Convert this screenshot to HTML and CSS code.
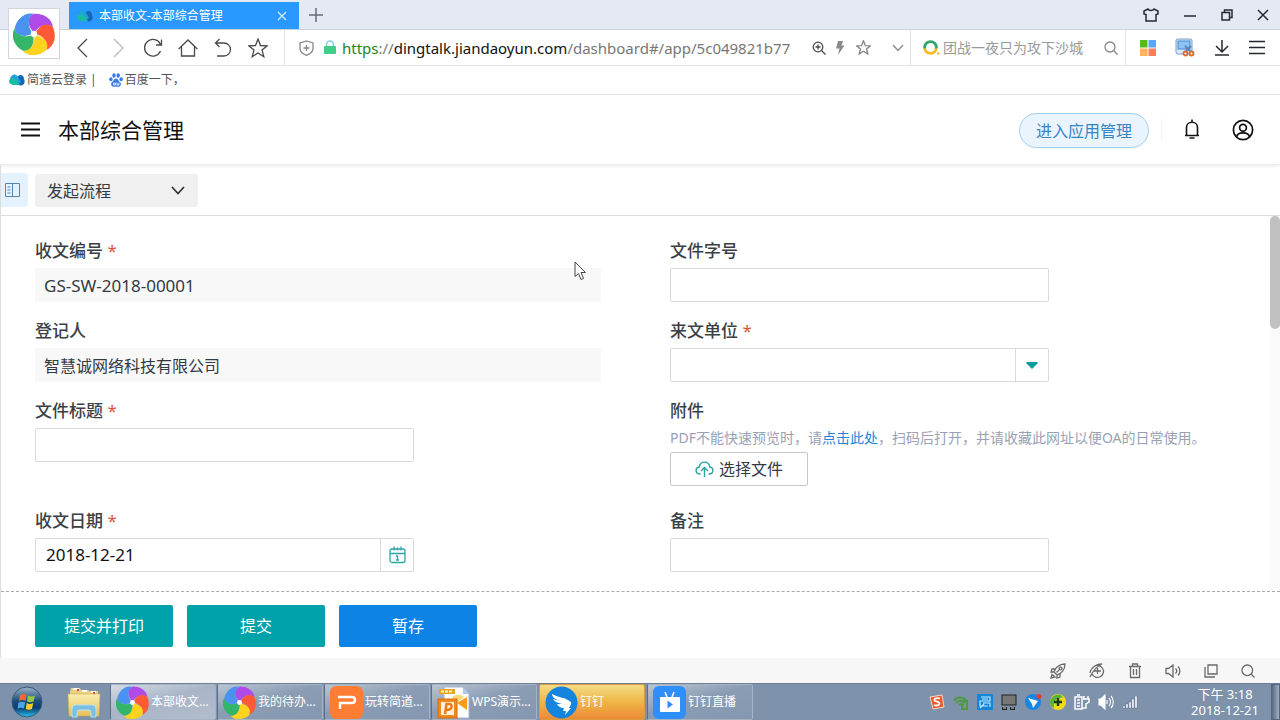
FILE: index.html
```
<!DOCTYPE html>
<html lang="zh-CN">
<head>
<meta charset="utf-8">
<title>本部收文-本部综合管理</title>
<link rel="stylesheet" href="styles.css">
</head>
<body>
<svg class="defs" aria-hidden="true">
  <defs>
    <linearGradient id="orb" x1="0" y1="0" x2="0" y2="1"><stop offset="0" stop-color="#9fb4c8"/><stop offset=".45" stop-color="#1f4e7e"/><stop offset=".7" stop-color="#0b3c70"/><stop offset="1" stop-color="#2cc3ef"/></linearGradient>
    <linearGradient id="folder" x1="0" y1="0" x2="0" y2="1"><stop offset="0" stop-color="#fbeeb0"/><stop offset="1" stop-color="#e6c05c"/></linearGradient>
    <linearGradient id="ring" x1="0" y1="0" x2="0" y2="1"><stop offset=".5" stop-color="#2fa768"/><stop offset=".65" stop-color="#f9b91f"/></linearGradient>
    <path id="petal" d="M20 19C12 13 11 5 17 1C26-1 35 3 37 11C32 8 24 10 20 19Z"/>
    <symbol id="swirl" viewBox="0 0 40 40">
      <g transform="rotate(8 20 20)">
      <use href="#petal" fill="#b04bea"/>
      <use href="#petal" fill="#ff5a35" transform="rotate(72 20 20)"/>
      <use href="#petal" fill="#ffd21f" transform="rotate(144 20 20)"/>
      <use href="#petal" fill="#33b56a" transform="rotate(216 20 20)"/>
      <use href="#petal" fill="#4b92f0" transform="rotate(288 20 20)"/>
      </g>
      <circle cx="20" cy="20" r="3" fill="#fff"/>
    </symbol>
    <symbol id="cloud" viewBox="0 0 16 12">
      <path d="M8 4C9 0 15 0 15 5C17 9 14 12 11 11.500L5 9Z" fill="#1766b5"/>
      <path d="M1 5C2 0 7-1 9 3L12 8L7 11C2 11-1 9 1 5Z" fill="#1fa3d8"/>
      <path d="M1 5C4 3 6 5 8 7L11 11H5C1 11-1 8 1 5Z" fill="#18bda2"/>
    </symbol>
  </defs>
</svg>

<header class="browser">
  <div class="brand"><svg width="42" height="42"><use href="#swirl"/></svg></div>
  <div class="tabs">
    <div class="tab">
      <svg width="16" height="12"><use href="#cloud"/></svg>
      <span class="tab-title">本部收文-本部综合管理</span>
      <button class="bare" aria-label="关闭标签"><svg width="10" height="10" viewBox="0 0 10 10" stroke="#d7ecff" stroke-width="1.200"><path d="M1 1L9 9M9 1L1 9"/></svg></button>
    </div>
    <button class="bare add" aria-label="新标签"><svg width="14" height="14" viewBox="0 0 14 14" stroke="#66697a" stroke-width="1.500"><path d="M7 0V14M0 7H14"/></svg></button>
    <div class="window-buttons">
      <button class="bare" aria-label="皮肤"><svg width="16" height="16" viewBox="0 0 16 16" class="line dark"><path d="M5 2C6 4 10 4 11 2L15 4V7L13 7.500V14H3V7.500L1 7V4Z"/></svg></button>
      <button class="bare" aria-label="最小化"><svg width="14" height="16" viewBox="0 0 14 16" class="line dark"><path d="M1 9H13"/></svg></button>
      <button class="bare" aria-label="还原"><svg width="12" height="12" viewBox="0 0 12 12" class="line dark"><path d="M1 3.500H8.500V11H1ZM3.500 3V1H11V8.500H9"/></svg></button>
      <button class="bare" aria-label="关闭"><svg width="12" height="12" viewBox="0 0 12 12" class="line dark"><path d="M1 1L11 11M11 1L1 11"/></svg></button>
    </div>
  </div>

  <div class="toolbar">
    <nav class="nav-buttons" aria-label="导航">
      <button class="bare" aria-label="后退"><svg width="20" height="20" viewBox="0 0 20 20" class="line"><path d="M14 1L5 10L14 19"/></svg></button>
      <button class="bare" aria-label="前进"><svg width="20" height="20" viewBox="0 0 20 20" class="line pale"><path d="M6 1L15 10L6 19"/></svg></button>
      <button class="bare" aria-label="刷新"><svg width="20" height="20" viewBox="0 0 20 20" class="line"><path d="M17.500 13A8.300 8.300 0 1 1 17.500 6.500M18.500 1.500V7H13"/></svg></button>
      <button class="bare" aria-label="主页"><svg width="20" height="20" viewBox="0 0 20 20" class="line"><path d="M0.700 11L10 2L19.300 11M3.500 8.500V18H16.500V8.500"/></svg></button>
      <button class="bare" aria-label="撤销"><svg width="20" height="20" viewBox="0 0 20 20" class="line"><path d="M6.500 1L2.500 5L6.500 9M3 5H11A6.500 6.500 0 0 1 11 18H4"/></svg></button>
      <button class="bare" aria-label="收藏"><svg width="20" height="20" viewBox="0 0 20 20" class="line"><path d="M10 1L12.500 7.500L19.200 7.800L14 12L15.800 18.700L10 15L4.200 18.700L6 12L0.800 7.800L7.500 7.500Z"/></svg></button>
    </nav>
    <div class="address">
      <svg width="15" height="16" viewBox="0 0 15 16" class="line grey"><path d="M7.500 1L14 3V8.500C14 12 11 14 7.500 15.300C4 14 1 12 1 8.500V3ZM7.500 5V11M4.500 8H10.500"/></svg>
      <svg class="lock" width="12" height="15" viewBox="0 0 12 15"><path d="M2.500 7V4.500A3.500 3.500 0 0 1 9.500 4.500V7" fill="none" stroke="#85cfe4" stroke-width="1.600"/><rect y="6" width="12" height="8" rx="1" fill="#3fce89"/></svg>
      <div class="url" role="textbox" aria-label="地址"><span class="scheme">https</span>://<span class="host">dingtalk.jiandaoyun.com</span>/dashboard#/app/5c049821b77</div>
      <svg width="14" height="14" viewBox="0 0 14 14" class="line"><circle cx="6" cy="6" r="4.800"/><path d="M9.500 9.500L13.500 13.500M3.500 6H8.500M6 3.500V8.500"/></svg>
      <svg class="bolt" width="10" height="14" viewBox="0 0 10 14"><path d="M3 0H8L6.500 4.500H9.500L3 14L4.500 7.500H1Z" fill="#8a8a8a"/></svg>
      <svg width="15" height="15" viewBox="0 0 20 20" class="line grey thick"><path d="M10 1L12.500 7.500L19.200 7.800L14 12L15.800 18.700L10 15L4.200 18.700L6 12L0.800 7.800L7.500 7.500Z"/></svg>
    </div>
    <button class="bare drop" aria-label="历史地址"><svg width="12" height="8" viewBox="0 0 12 8" class="line grey"><path d="M1 1L6 6.500L11 1"/></svg></button>
    <div class="search">
      <svg width="17" height="16" viewBox="0 0 17 16"><circle cx="7.500" cy="7.500" r="5.900" fill="none" stroke="url(#ring)" stroke-width="2.800"/><circle cx="15.200" cy="13.500" r="1.200" fill="#f9b91f"/></svg>
      <input type="text" aria-label="搜索" placeholder="团战一夜只为攻下沙城">
      <svg width="14" height="14" viewBox="0 0 14 14" class="line grey"><circle cx="6" cy="6" r="5"/><path d="M9.700 9.700L13.500 13.500"/></svg>
    </div>
    <div class="tools">
      <button class="bare" aria-label="应用"><svg width="16" height="16" viewBox="0 0 16 16"><path d="M0 0H7.500V7.500H0Z" fill="#5cb917"/><path d="M8.500 0H16V7.500H8.500Z" fill="#56a8ff"/><path d="M0 8.500H7.500V16H0Z" fill="#ffb35c"/><path d="M8.500 8.500H16V16H8.500Z" fill="#ff7d52"/></svg></button>
      <button class="bare" aria-label="截图"><svg width="20" height="20" viewBox="0 0 20 20"><rect x="1" y="1" width="16" height="15" rx="2" fill="#d8e9f8" stroke="#7a9dc4"/><rect x="3" y="3" width="12" height="8" fill="#8cc4f4" stroke="#4689cf"/><path d="M10 8L16 14M16 8L10 14" stroke="#5685bd" stroke-width="2"/><g fill="#fff" stroke="#df6927" stroke-width="1.800"><circle cx="10.500" cy="15.500" r="2"/><circle cx="16.500" cy="15.500" r="2"/></g></svg></button>
      <button class="bare" aria-label="下载"><svg width="16" height="17" viewBox="0 0 16 17" class="line dark"><path d="M8 1V12M2 7L8 13L14 7M1 16H15"/></svg></button>
      <button class="bare" aria-label="菜单"><svg width="16" height="15" viewBox="0 0 16 15" class="line dark"><path d="M0 1.500H16M0 7.500H16M0 13.500H16"/></svg></button>
    </div>
  </div>

  <nav class="bookmarks" aria-label="书签">
    <a href="#"><svg width="16" height="12"><use href="#cloud"/></svg>简道云登录 |</a>
    <a href="#"><svg width="14" height="14" viewBox="0 0 14 14" fill="#3979e8"><ellipse cx="5" cy="2.500" rx="1.700" ry="2.300"/><ellipse cx="9.200" cy="2.500" rx="1.700" ry="2.300"/><ellipse cx="1.900" cy="6.200" rx="1.700" ry="2"/><ellipse cx="12.200" cy="6.200" rx="1.700" ry="2"/><path d="M7 5.500C10 6 9 8 11.500 9.500C13 13 10 14.500 7 13.500C4 14.500 1 13 2.500 9.500C5 8 4 6 7 5.500Z"/><path d="M4.500 10H6.500V12H4.500ZM8 9.500V12H10V9.500" fill="none" stroke="#fff" stroke-width=".8"/></svg>百度一下，</a>
  </nav>
</header>

<header class="app-header">
  <button class="bare" aria-label="菜单"><svg width="19" height="15" viewBox="0 0 19 15" stroke="#111" stroke-width="2"><path d="M0 1.500H19M0 7.500H19M0 13.500H19"/></svg></button>
  <h1>本部综合管理</h1>
  <button class="pill">进入应用管理</button>
  <button class="bare bell" aria-label="通知"><svg width="16" height="21" viewBox="0 0 16 21" fill="none" stroke="#111" stroke-width="1.600"><path d="M8 0.500V3M1 16.500H15M2.500 16V8.500C2.500 1.500 13.500 1.500 13.500 8.500V16M5.500 19H10.500"/></svg></button>
  <button class="bare" aria-label="用户"><svg width="22" height="22" viewBox="0 0 22 22" fill="none" stroke="#111" stroke-width="1.700"><circle cx="11" cy="11" r="9.600"/><circle cx="11" cy="8.800" r="3.400"/><path d="M4.500 18C5.500 12.500 16.500 12.500 17.500 18"/></svg></button>
</header>

<main class="workspace">
  <div class="flow-bar">
    <button class="side-toggle" aria-label="展开侧栏"><svg width="15" height="14" viewBox="0 0 15 14" fill="none" stroke="#5685b0"><path d="M.5.500H14.500V13.500H.5ZM7.500.500V13.500M2.500 4H5.500M2.500 7H5.500M2.500 10H5.500"/></svg></button>
    <div class="flow-select">
      <select aria-label="流程"><option>发起流程</option></select>
      <svg width="14" height="9" viewBox="0 0 14 9" fill="none" stroke="#2d3540" stroke-width="1.700"><path d="M1 1L7 7.500L13 1"/></svg>
    </div>
  </div>

  <div class="form-area">
    <form class="form" id="receipt">
      <div class="field"><label for="no">收文编号 <b>*</b></label><input id="no" class="readonly code" type="text" value="GS-SW-2018-00001" readonly></div>
      <div class="field"><label for="word">文件字号</label><input id="word" class="box" type="text"></div>
      <div class="field"><label for="person">登记人</label><input id="person" class="readonly" type="text" value="智慧诚网络科技有限公司" readonly></div>
      <div class="field"><label for="unit">来文单位 <b>*</b></label>
        <div class="box group"><select id="unit"><option></option></select><span class="addon"><svg width="12" height="7" viewBox="0 0 12 7" fill="#0a9c9b"><path d="M1 0H11L12 1L6 7L0 1Z"/></svg></span></div>
      </div>
      <div class="field"><label for="subject">文件标题 <b>*</b></label><input id="subject" class="box" type="text"></div>
      <div class="field attach"><label for="pick">附件</label>
        <p class="hint">PDF不能快速预览时，请<a href="#">点击此处</a>，扫码后打开，并请收藏此网址以便OA的日常使用。</p>
        <button id="pick" class="pick" type="button"><svg width="19" height="17" viewBox="0 0 19 17" fill="none" stroke="#27a5a1" stroke-width="1.400"><path d="M5.500 13H4.500C0 12.500 0 6.500 4.300 6C5-.5 14-.5 14.700 6C19 6.500 19 12.500 14.500 13H13.500M9.500 16V7M6 10L9.500 6.500L13 10"/></svg>选择文件</button>
      </div>
      <div class="field"><label for="date">收文日期 <b>*</b></label>
        <div class="box group"><input id="date" class="code" type="text" value="2018-12-21"><button class="addon" type="button" aria-label="选择日期"><svg width="17" height="18" viewBox="0 0 17 18" fill="none" stroke="#2ba7a4" stroke-width="1.300"><rect x="1" y="3" width="15" height="13.500" rx="2"/><path d="M1 7.500H16M5 .5V4.500M8.500 1.500V4.500M12 .5V4.500M7 10H8.500V14M7 14H10"/></svg></button></div>
      </div>
      <div class="field"><label for="memo">备注</label><input id="memo" class="box" type="text"></div>
    </form>
    <div class="scroll-track"><div class="scroll-thumb"></div></div>
  </div>

  <div class="actions">
    <button class="action" form="receipt">提交并打印</button>
    <button class="action" form="receipt">提交</button>
    <button class="action draft" type="button">暂存</button>
  </div>
</main>

<div class="status-bar">
  <button class="bare" aria-label="加速"><svg width="16" height="16" viewBox="0 0 16 16" class="line mid"><path d="M15 1C9 1 5 5 4 9L7 12C11 11 15 7 15 1ZM5 6H2L1 9L4 9M10 11V14L7 15V12M1 15L2 11.500L5 14ZM6.500 9.500L9 7"/><circle cx="10.500" cy="5.500" r="1.400"/></svg></button>
  <button class="bare" aria-label="内核"><svg width="16" height="16" viewBox="0 0 16 16" class="line mid"><path d="M5 3.500A6 6 0 1 1 3 11M1 10C2 4 8 1 13 1C8 3 4 8 1 14M5 8H12M8.500 5V11"/></svg></button>
  <button class="bare" aria-label="清理"><svg width="14" height="16" viewBox="0 0 14 16" class="line mid"><path d="M1 3.500H13M4.500 3V1H9.500V3M2.500 4V14.500H11.500V4M5.500 6V12M8.500 6V12"/></svg></button>
  <button class="bare" aria-label="声音"><svg width="16" height="14" viewBox="0 0 16 14" class="line mid"><path d="M1 4.500H3.500L8 1V13L3.500 9.500H1ZM10.500 4.500C12 6 12 8 10.500 9.500M13 2.500C15.500 5 15.500 9 13 11.500"/></svg></button>
  <button class="bare" aria-label="窗口"><svg width="14" height="14" viewBox="0 0 14 14" class="line mid"><path d="M4 1H13V10H4ZM1 3V13H11"/></svg></button>
  <button class="bare" aria-label="查找"><svg width="14" height="14" viewBox="0 0 14 14" class="line mid"><circle cx="6.300" cy="6.300" r="5.300"/><path d="M10 10L13.500 13.500"/></svg></button>
</div>

<footer class="taskbar">
  <button class="bare start" aria-label="开始"><svg width="32" height="32" viewBox="0 0 32 32"><circle cx="16" cy="16" r="15" fill="url(#orb)" stroke="#375a7c"/><path d="M9 9C11 7.500 13 7.500 15.500 9L14.500 15C12 13.500 10 14 8 15Z" fill="#f0672f"/><path d="M17 9.500C19.500 11 22 10.500 24 9.500L22.500 15.500C20 16.500 18 16.500 16 15.500Z" fill="#94c83d"/><path d="M7.500 16.500C10 15.200 12 15.500 14.200 16.500L13 22.500C11 21.500 9 21.500 6.500 22.500Z" fill="#4aa8e8"/><path d="M15.700 17C18 18.500 20 18 22.200 17L21 23C19 24 17 24 14.700 23Z" fill="#fcc934"/></svg></button>
  <button class="bare explorer" aria-label="资源管理器"><svg width="34" height="32" viewBox="0 0 34 32"><path d="M3 6L4 2H13L14 4H21L22 5H31V28H3Z" fill="#e9cf7e"/><path d="M6 3H12M15 5H20M24 6H29" stroke="#fff" stroke-width="2"/><path d="M10 4H12M26 7H28" stroke="#d54b34" stroke-width="2"/><path d="M1 8H33L32 30H2Z" fill="url(#folder)" stroke="#d0ac4d" stroke-width=".6"/><path d="M5 31V23Q5 19 9 19H25Q29 19 29 23V31H24V25Q24 24 22 24H12Q10 24 10 25V31Z" fill="#79bfe3" stroke="#b2e2f4"/></svg></button>
  <div class="tasks">
    <button class="task active"><svg width="33" height="33"><use href="#swirl"/></svg>本部收文...</button>
    <button class="task"><svg width="33" height="33"><use href="#swirl"/></svg>我的待办...</button>
    <button class="task"><svg width="33" height="33" viewBox="0 0 33 33"><rect width="33" height="33" rx="6" fill="#ff7d32"/><path d="M8 11H22Q25 11 25 14Q25 17 22 17H10V23" fill="none" stroke="#fff" stroke-width="2.400"/></svg>玩转简道...</button>
    <button class="task"><svg width="33" height="33" viewBox="0 0 33 33"><path d="M7 1H26L32 8V32H7Z" fill="#fff" stroke="#a4b3d0"/><path d="M26 1V8H32Z" fill="#a9c8ed"/><path d="M2 3H18V8H2Z" fill="#e9a12a"/><path d="M4 5.500H16" stroke="#fff3cf" stroke-width="2" stroke-dasharray="3 1"/><path d="M30 11V24L20 17Z" fill="#f69c1c"/><path d="M15 11A9 9 0 0 1 27 11L20 17Z" fill="#ffd87a"/><rect x="1" y="13" width="19" height="19" fill="#f18a1b" stroke="#d46a0b"/><rect x="4" y="16" width="13" height="13" fill="#fff1dc"/><path d="M8 28L9.500 18H12Q15 18 14.500 21Q14 24 9 24" fill="none" stroke="#ee7a12" stroke-width="2.500"/></svg>WPS演示...</button>
    <button class="task alert"><svg width="33" height="33" viewBox="0 0 33 33"><circle cx="16.500" cy="16.500" r="16" fill="#1485df"/><path d="M7 8C14 12 20 11 26 16C27 18 25 20 24 22H26L20 29L21 25H18L19 22C15 22 13 20 12 18L17 18C12 17 9 15 8 13L15 15C10 13 7 11 7 8Z" fill="#fff"/></svg>钉钉</button>
    <button class="task"><svg width="33" height="33" viewBox="0 0 33 33"><rect width="33" height="33" rx="6" fill="#2e8efa"/><path d="M12 6L14 11M21 6L19 11" stroke="#fff" stroke-width="1.500"/><rect x="7" y="11" width="20" height="15" rx="1" fill="#fff"/><path d="M14.500 14.500L20 18.500L14.500 22.500Z" fill="#2e8efa"/></svg>钉钉直播</button>
  </div>
  <div class="tray">
    <svg width="16" height="16" viewBox="0 0 16 16"><path d="M1 3L13 1L15 13L4 15Z" fill="#e95b2b" stroke="#f8d9c8"/><path d="M11 4.500C7 3.500 4 5 6 7C8 8 12 8 10 10.500C9 12 6 11.500 5 11" fill="none" stroke="#fff" stroke-width="1.800"/></svg>
    <svg width="16" height="16" viewBox="0 0 16 16" fill="none" stroke="#4f9941" stroke-width="2"><path d="M1 7C3 3 9 2 13 6M3 9C6 6 9 6 12 9M6 11C8 9 9 10 11 11M8 7H14V15H9V11"/></svg>
    <svg width="16" height="16" viewBox="0 0 16 16"><rect width="16" height="16" rx="1" fill="#1586d7"/><path d="M4 3H13V7H3V12H11M5 5H11M6 9H13V13M3 14L7 10" fill="none" stroke="#bde8ff" stroke-width="1.200"/></svg>
    <svg width="16" height="16" viewBox="0 0 16 16"><rect x="1" y="1" width="14" height="10" fill="#777" stroke="#222"/><path d="M1 14.500H6M9 14.500H14" stroke="#222" stroke-width="3"/><path d="M2 14H5M10 14H13" stroke="#ddd"/></svg>
    <svg width="17" height="16" viewBox="0 0 17 16"><circle cx="8" cy="8" r="8" fill="#1687e0"/><path d="M3 4L13 7L8 14L7 10Z" fill="#fff"/><circle cx="14" cy="2.500" r="2.500" fill="#e33a38"/></svg>
    <svg width="16" height="16" viewBox="0 0 16 16"><circle cx="8" cy="8" r="8" fill="#f5d91b"/><path d="M1 12A8 8 0 0 1 11 1L13 4C6 3 3 8 4 14Z" fill="#55b539"/><path d="M8 4V12M4 8H12" stroke="#123c18" stroke-width="2.400"/></svg>
    <svg width="16" height="16" viewBox="0 0 16 16" fill="none" stroke="#fff" stroke-width="1.500"><path d="M1 3H8V15H1ZM3 1H6M10 2V5M14 2V5M9 5H15V8L12 10V14H8M3 6H6M3 9H6M3 12H6"/></svg>
    <svg width="16" height="16" viewBox="0 0 16 16" fill="none" stroke="#fff" stroke-width="1.100"><path d="M1 5H3L7 1V15L3 11H1Z" fill="#fff"/><path d="M9 6V10M11 4C13 6 13 10 11 12M13 2C16 5 16 11 13 14"/></svg>
    <svg width="16" height="16" viewBox="0 0 16 16"><path d="M1 12H3V14H1ZM4 10H6V14H4ZM7 8H9V14H7ZM10 5H12V14H10ZM13 2H15V14H13Z" fill="#fff" stroke="#546781" stroke-width=".4"/></svg>
  </div>
  <div class="clock"><div>下午 3:18</div><div>2018-12-21</div></div>
  <button class="show-desktop" aria-label="显示桌面"></button>
</footer>

<svg class="pointer" width="13" height="20" viewBox="0 0 13 20" aria-hidden="true"><path d="M1 1V15.500L4.500 12.500L7 18.500L9.500 17.500L7 11.500H11.500Z" fill="#fff" stroke="#444"/></svg>
</body>
</html>
```
FILE: styles.css
```
* { box-sizing: border-box; }

body {
  margin: 0;
  min-height: 100vh;
  display: flex;
  flex-direction: column;
  position: relative;
  background: #fff;
  color: #333a44;
  font: 16px/24px "Noto Sans", "Noto Sans CJK SC", sans-serif;
}

svg { display: block; flex: none; }
.defs { position: absolute; width: 0; height: 0; }
button, input, select { font: inherit; color: inherit; margin: 0; }
select { appearance: none; border: 0; background: none; }
.bare { display: flex; align-items: center; justify-content: center; padding: 0; border: 0; background: none; }

.line { fill: none; stroke: #4a4a4a; stroke-width: 1.3; }
.line.dark { stroke: #26282d; stroke-width: 1.5; }
.line.grey { stroke: #888; }
.line.mid { stroke: #6a6a6a; }
.line.pale { stroke: #bbb; }
.line.thick { stroke-width: 1.8; }

/* Browser frame */
.brand {
  position: absolute;
  left: 8px;
  top: 8px;
  width: 52px;
  height: 51px;
  display: flex;
  align-items: center;
  justify-content: center;
  background: #fff;
  border: 1px solid #d3d5dd;
}
.tabs {
  display: flex;
  height: 30px;
  padding-left: 69px;
  background: #e5e9f4;
  border-bottom: 1px solid #ccd2dc;
}
.tab {
  display: flex;
  align-items: center;
  gap: 6px;
  width: 230px;
  margin-top: 2px;
  padding: 0 12px 0 8px;
  background: #2998ff;
  color: #fff;
  font-size: 12px;
}
.tab-title { flex: 1; }
.add { margin-left: 10px; }
.window-buttons { display: flex; gap: 24px; margin-left: auto; padding-right: 11px; }

.toolbar { display: flex; height: 36px; border-bottom: 1px solid #e4e4e4; }
.nav-buttons { display: flex; gap: 15px; padding: 0 16px 0 73px; border-right: 1px solid #e4e4e4; }
.address { display: flex; flex: 1; min-width: 0; align-items: center; padding: 0 14px; }
.lock { margin-left: 10px; }
.url { flex: 1; min-width: 0; margin: 0 8px 0 6px; overflow: hidden; white-space: nowrap; color: #777; font-size: 15px; }
.scheme { color: #23841c; }
.host { color: #111; }
.bolt { margin: 0 11px 0 9px; }
.drop { width: 26px; border-right: 1px solid #e4e4e4; }
.search { display: flex; align-items: center; width: 215px; padding: 0 7px 0 12px; border-right: 1px solid #e4e4e4; }
.search input { flex: 1; min-width: 0; padding: 0 3px; border: 0; background: none; font-size: 14px; }
.search input::placeholder { color: #999; opacity: 1; }
.tools { display: flex; gap: 19px; padding: 0 15px 0 14px; }

.bookmarks { display: flex; gap: 12px; height: 29px; padding-left: 9px; border-bottom: 1px solid #e2e4e8; font-size: 12px; }
.bookmarks a { display: flex; align-items: center; gap: 2px; color: #555; text-decoration: none; }

/* Application header */
.app-header {
  display: flex;
  align-items: center;
  height: 70px;
  padding: 0 26px 0 21px;
  border-bottom: 1px solid #ececec;
  box-shadow: 0 1px 3px #e8e8e8;
}
h1 { flex: 1; margin: 0 0 0 18px; color: #111; font-size: 21px; font-weight: 400; line-height: 30px; }
.pill {
  width: 130px;
  height: 35px;
  margin-top: 2px;
  padding: 0;
  border: 1px solid #a5cfee;
  border-radius: 18px;
  background: #e9f4fe;
  color: #3c83c2;
}
.bell { margin: 0 32px 0 12px; padding-left: 22px; border-left: 1px solid #f2f2f2; }

/* Workspace */
.workspace { display: flex; flex: 1; flex-direction: column; border-left: 1px solid #ddd; }
.flow-bar { display: flex; align-items: center; gap: 7px; height: 51px; border-bottom: 1px solid #dcdcdc; }
.side-toggle { display: flex; align-items: center; width: 27px; height: 34px; padding: 0 4px; border: 0; border-radius: 0 4px 4px 0; background: #e4f2ff; }
.flow-select { display: grid; grid-template-columns: 1fr 27px; align-items: center; width: 163px; height: 33px; border-radius: 3px; background: #f0f0f0; }
.flow-select select { height: 33px; padding: 1px 12px 0; }

.form-area { display: flex; flex: 1; }
.form {
  display: grid;
  flex: 1;
  grid-template-columns: 1fr 1fr;
  align-content: start;
  column-gap: 69px;
  row-gap: 17px;
  padding: 23px 34px 18px;
}
.field { display: flex; flex-direction: column; align-items: flex-start; }
.field label { margin-bottom: 5px; color: #3b3f46; font-size: 17px; font-weight: 500; }
.field b { color: #d9513c; font-weight: 400; }
.readonly { width: 100%; height: 34px; padding: 0 9px; border: 0; background: #f8f8f9; }
.code { font-size: 17px; }
.box { width: 67%; height: 34px; padding: 0 10px; border: 1px solid #d8dadb; border-radius: 2px; background: #fff; color: #111; }
.group { display: flex; padding: 0; }
.group input, .group select { flex: 1; min-width: 0; padding: 0 10px; border: 0; background: none; }
.addon { display: flex; align-items: center; justify-content: center; width: 33px; padding: 0; border: 0; border-left: 1px solid #d8dadb; background: none; }
.attach { padding-bottom: 6px; }
.hint { margin: 0 0 4px; color: #99a1b5; font-size: 14px; line-height: 20px; white-space: nowrap; }
.hint a { color: #1b86dc; text-decoration: none; }
.pick { display: flex; align-items: center; justify-content: center; gap: 5px; width: 138px; height: 34px; padding: 0; border: 1px solid #c6c9cc; border-radius: 2px; background: #fff; }
.scroll-track { width: 10px; background: #fafafa; }
.scroll-thumb { height: 113px; border-radius: 5px; background: #c1c1c1; }

.actions { display: flex; gap: 14px; padding: 13px 34px 11px; border-top: 1px dashed #aaa; }
.action { width: 138px; height: 42px; padding: 0; border: 0; border-radius: 2px; background: #00a2a9; color: #fff; }
.draft { background: #0d84e5; }

/* Browser status bar */
.status-bar { display: flex; justify-content: flex-end; gap: 23px; height: 25px; padding-right: 25px; background: #f7f7f7; }

/* Desktop taskbar */
.taskbar { display: flex; height: 37px; background: #7e92ab; border-top: 1px solid #6d8098; color: #fff; font-size: 12px; }
.start { width: 54px; }
.explorer { width: 56px; padding-left: 3px; }
.tasks { display: flex; gap: 1px; }
.task {
  display: flex;
  align-items: center;
  gap: 2px;
  width: 106px;
  padding: 0 0 0 5px;
  border: 1px solid #a5b3c5;
  border-left-color: #5b6e87;
  border-radius: 2px;
  background: linear-gradient(165deg, #b9c4d1, #8b9db4 45%, #8597b0);
  white-space: nowrap;
}
.active { background: linear-gradient(165deg, #d5dbe3, #a9b5c7 45%, #b2bdcc); }
.alert { margin: 0 1px; background: linear-gradient(#f3dc87, #efb645 50%, #ec8a38); border-color: #d99a3b; }
.tray { display: flex; align-items: center; gap: 8px; margin-left: auto; }
.clock { width: 92px; margin-left: 41px; text-align: center; line-height: 16px; padding: 2px 0; font-size: 13px; }
.show-desktop { width: 9px; padding: 0; border: 1px solid #52667f; background: linear-gradient(90deg, #566a82, #a0afc1); }

.pointer { position: absolute; left: 574px; top: 261px; }
```
